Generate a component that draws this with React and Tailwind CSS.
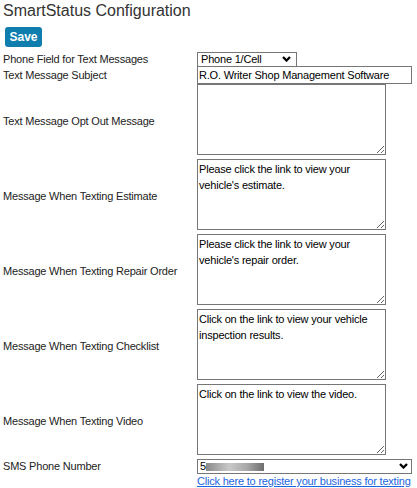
import React from 'react';

const Chevron = () => (
  <svg width="9" height="6" viewBox="0 0 9 6" className="block">
    <path d="M1 1 L4.5 4.5 L8 1" fill="none" stroke="#000" strokeWidth="2.3" />
  </svg>
);

const messageRows = [
  { label: 'Text Message Opt Out Message', value: '' },
  { label: 'Message When Texting Estimate', value: "Please click the link to view your vehicle's estimate." },
  { label: 'Message When Texting Repair Order', value: "Please click the link to view your vehicle's repair order." },
  { label: 'Message When Texting Checklist', value: 'Click on the link to view your vehicle inspection results.' },
  { label: 'Message When Texting Video', value: 'Click on the link to view the video.' },
];

const Label = ({ children }) => (
  <div className="w-[194px] shrink-0 text-[11px] tracking-[-0.2px] text-[#222]">{children}</div>
);

export default function App() {
  return (
    <div className="min-h-[488px] bg-white px-[3px] font-['Liberation_Sans',Arial,sans-serif] text-[#333]">
      <h1 className="text-[16px] leading-[22px]">SmartStatus Configuration</h1>
      <button className="ml-[2px] mt-[5px] h-[20px] w-[37px] rounded-[3px] bg-[#0f7dae] text-[12px] font-bold text-white">
        Save
      </button>

      <div className="mt-[4px]">
        {/* phone field */}
        <div className="flex h-[14px] items-center">
          <Label>Phone Field for Text Messages</Label>
          <div className="relative h-[15px] w-[100px]">
            <select
              defaultValue="cell"
              className="block h-[15px] w-full appearance-none border border-[#767676] bg-white pl-[3px] text-[11px] leading-[13px] tracking-[-0.2px] text-black"
            >
              <option value="cell">Phone 1/Cell</option>
              <option value="home">Phone 2/Home</option>
            </select>
            <div className="pointer-events-none absolute right-[6px] top-[4px]">
              <Chevron />
            </div>
          </div>
        </div>

        {/* subject */}
        <div className="flex h-[18px] items-center">
          <Label>Text Message Subject</Label>
          <input
            type="text"
            defaultValue="R.O. Writer Shop Management Software"
            className="block h-[18px] w-[215px] border border-[#767676] bg-white px-[1px] text-[11px] tracking-[-0.2px] text-black"
          />
        </div>

        {messageRows.map((row) => (
          <div key={row.label} className="flex h-[75px] items-center">
            <Label>{row.label}</Label>
            <div className="pb-[4px]">
              <textarea
                defaultValue={row.value}
                className="block h-[71px] w-[189px] border border-[#767676] bg-white p-[1px] text-[11px] leading-[16px] tracking-[-0.2px] text-black"
              />
            </div>
          </div>
        ))}

        {/* sms number */}
        <div className="flex h-[15px] items-center">
          <Label>SMS Phone Number</Label>
          <div className="relative h-[15px] w-[215px]">
            <div className="flex h-[15px] w-full items-center border border-[#767676] bg-white pl-[2px] text-[11px] tracking-[-0.2px] text-black">
              <span>5</span>
              <div className="h-[8px] w-[58px] bg-[linear-gradient(90deg,#8a8a8a,#c8c8c8_40%,#a9a9a9_70%,#6e6e6e)]" />
            </div>
            <div className="pointer-events-none absolute right-[4px] top-[4px]">
              <Chevron />
            </div>
          </div>
        </div>

        <div className="flex h-[14px] items-center">
          <div className="w-[194px] shrink-0" />
          <a href="#" className="text-[11px] leading-[14px] tracking-[-0.2px] text-[#1a66e0] underline">
            Click here to register your business for texting
          </a>
        </div>
      </div>
    </div>
  );
}
